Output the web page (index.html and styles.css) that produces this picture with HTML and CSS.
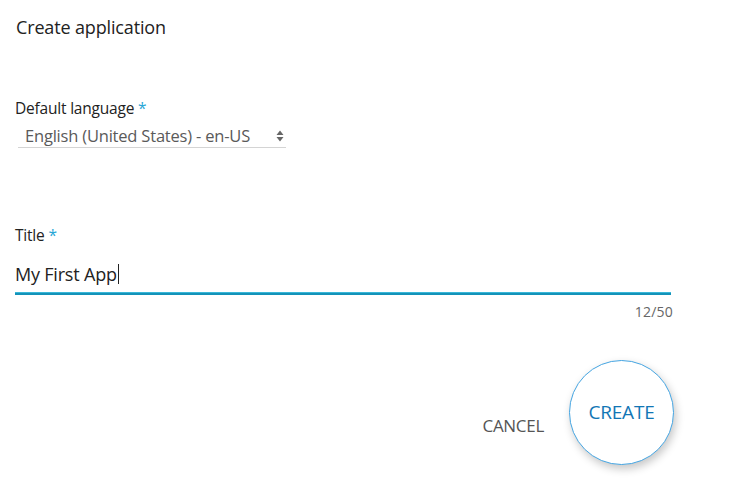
FILE: index.html
```html
<!DOCTYPE html>
<html>
<head>
<meta charset="utf-8">
<link rel="stylesheet" href="styles.css">
</head>
<body>
<div class="dialog">
  <h1 class="heading">Create application</h1>
  <div class="field lang">
    <label class="label">Default language <span class="req">*</span></label>
    <div class="select">
      <span class="select-text">English (United States) - en-US</span>
      <svg class="arrows" width="8" height="12" viewBox="0 0 8 12"><path d="M4 0.5 L7.5 5 L0.5 5 Z M0.5 7 L7.5 7 L4 11.5 Z" fill="#666"/></svg>
    </div>
  </div>
  <div class="field title">
    <label class="label">Title <span class="req">*</span></label>
    <div class="input"><span class="input-text">My First App</span><span class="caret"></span></div>
    <div class="counter">12/50</div>
  </div>
  <div class="actions">
    <button class="cancel">CANCEL</button>
    <button class="create">CREATE</button>
  </div>
</div>
</body>
</html>
```
FILE: styles.css
```css
html, body { margin: 0; padding: 0; background: #fff; }
body { font-family: "Open Sans", "Noto Sans", sans-serif; color: #222; width: 753px; height: 498px; overflow: hidden; }
.dialog { padding: 15px 0 0 15px; width: 656px; display: flex; flex-direction: column; }
.heading { margin: 0 0 0 1px; font-size: 18px; font-weight: 400; line-height: 24px; color: #222; letter-spacing: -0.15px; }
.field { display: flex; flex-direction: column; }
.lang { margin-top: 59px; }
.label { font-size: 15.5px; line-height: 20px; color: #222; letter-spacing: -0.2px; }
.req { color: #2aa6d6; margin-left: 0; }
.select { margin: 8px 0 0 3px; width: 268px; height: 22px; border-bottom: 1px solid #d4d4d4; display: flex; align-items: center; justify-content: space-between; box-sizing: border-box; padding: 0 2px 1px 7px; }
.select-text { font-size: 16.5px; color: #5a5a5a; letter-spacing: -0.2px; line-height: 20px; }
.arrows { display: block; }
.title { margin-top: 77px; }
.input { margin-top: 13px; border-bottom: 2px solid #1493b9; box-shadow: 0 -1px 0 #3ab7d8 inset; display: flex; align-items: center; padding-bottom: 4px; box-sizing: border-box; height: 37px; }
.input-text { font-size: 18px; color: #222; letter-spacing: -0.2px; line-height: 24px; }
.caret { width: 1px; height: 20px; background: #222; margin-left: 1px; }
.counter { align-self: flex-end; font-size: 14px; color: #666; margin-top: 8px; line-height: 18px; margin-right: -2px; letter-spacing: 0.2px; }
.actions { display: flex; justify-content: flex-end; align-items: center; margin-top: 39px; gap: 25px; margin-right: -3px; }
button { font-family: inherit; background: none; border: none; padding: 0; cursor: pointer; }
.cancel { font-size: 17px; color: #555; margin-top: 26px; letter-spacing: -0.3px; }
.create { width: 105px; height: 105px; border-radius: 50%; background: #fff; border: 1.5px solid #45a5e2; box-shadow: 2px 4px 8px rgba(0,0,0,0.22); font-size: 19px; color: #1276b5; letter-spacing: -0.2px; box-sizing: border-box; padding-bottom: 2px; }
```
